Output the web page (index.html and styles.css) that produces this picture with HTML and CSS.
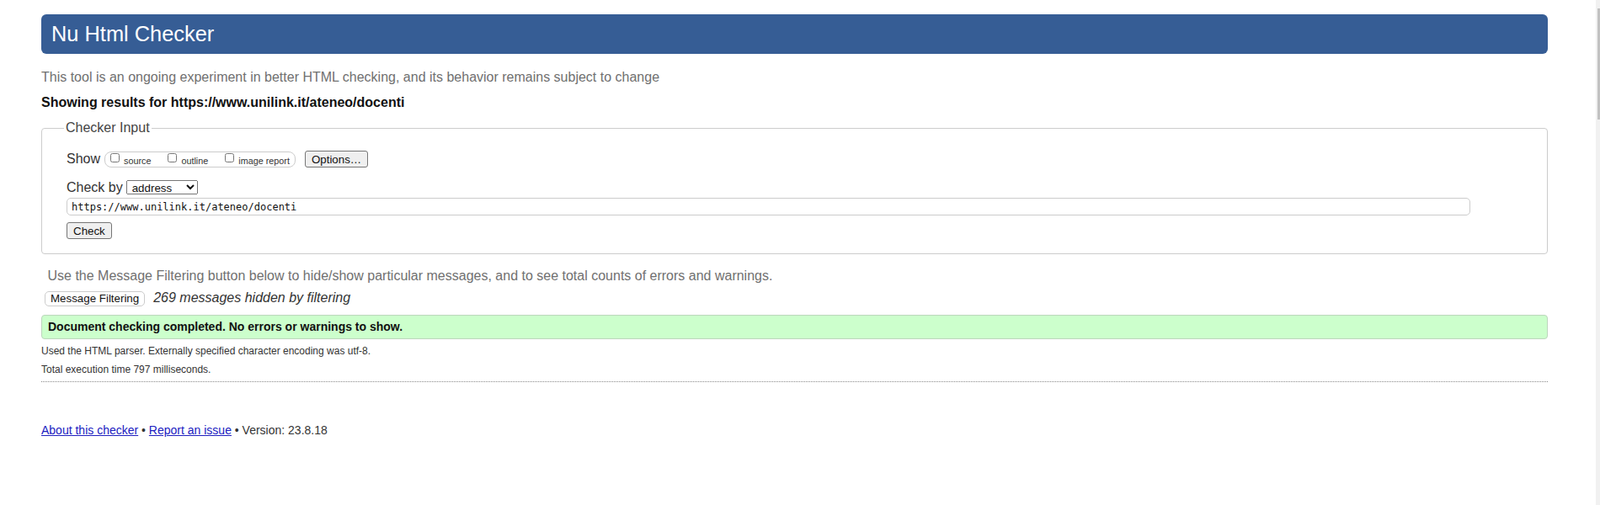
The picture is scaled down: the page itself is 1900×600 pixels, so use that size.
FILE: index.html
```html
<!DOCTYPE html>
<html lang="en">
<head>
    <meta charset="UTF-8">
    <meta name="viewport" content="width=device-width, initial-scale=1.0">
    <title>Showing results for https://www.unilink.it/ateneo/docenti - Nu Html Checker</title>
    <link rel="stylesheet" href="styles.css">
</head>
<body>
    <div class="page">
        <h1 class="masthead">Nu Html Checker</h1>
        <p class="intro">This tool is an ongoing experiment in better HTML checking, and its behavior remains subject to change</p>
        <p class="results-for">Showing results for https://www.unilink.it/ateneo/docenti</p>

        <form class="checker">
            <fieldset>
                <legend>Checker Input</legend>
                <div class="row show-row">
                    <span class="row-label">Show</span>
                    <span class="show-group">
                        <label><input type="checkbox" name="showsource">source</label>
                        <label><input type="checkbox" name="showoutline">outline</label>
                        <label><input type="checkbox" name="showimagereport">image report</label>
                    </span>
                    <button type="button" class="btn options-btn">Options…</button>
                </div>
                <div class="row checkby-row">
                    <span class="row-label">Check by</span>
                    <select class="checkby" name="checkby">
                        <option value="address">address</option>
                        <option value="file">file upload</option>
                        <option value="text">text input</option>
                    </select>
                </div>
                <input class="doc-url" type="url" name="doc" value="https://www.unilink.it/ateneo/docenti">
                <button type="submit" class="btn check-btn">Check</button>
            </fieldset>
        </form>

        <p class="filter-hint">Use the Message Filtering button below to hide/show particular messages, and to see total counts of errors and warnings.</p>
        <div class="filter-row">
            <button type="button" class="filter-btn">Message Filtering</button>
            <span class="hidden-count">269 messages hidden by filtering</span>
        </div>

        <p class="success">Document checking completed. No errors or warnings to show.</p>
        <p class="details">Used the HTML parser. Externally specified character encoding was utf-8.</p>
        <p class="details">Total execution time 797 milliseconds.</p>
        <hr class="divider">

        <p class="footer">
            <a href="#about">About this checker</a> • <a href="#issue">Report an issue</a> • Version: 23.8.18
        </p>
    </div>

    <div class="scrollbar"><div class="scrollbar-thumb"></div></div>
</body>
</html>
```

FILE: styles.css
```css
body {
    margin: 0;
    background: #fff;
    font-family: "Liberation Sans", Arial, sans-serif;
    color: #333;
}
.page {
    width: 1789px;
    margin-left: 49px;
    padding-top: 17px;
}
.masthead {
    margin: 0;
    height: 47px;
    display: flex;
    align-items: center;
    padding-left: 12px;
    background: #365d95;
    color: #fff;
    border-radius: 6px;
    font-size: 25.4px;
    font-weight: normal;
}
.intro {
    margin: 19px 0 0;
    font-size: 16px;
    line-height: 18px;
    color: #707070;
}
.results-for {
    margin: 12px 0 0;
    font-size: 16px;
    line-height: 18px;
    font-weight: bold;
    color: #111;
}

/* checker input box */
.checker fieldset {
    margin: 12px 0 0;
    padding: 18px 20px 17px 29px;
    border: 1px solid #ccc;
    border-radius: 4px;
}
.checker legend {
    margin-left: -3px;
    padding: 0 2px;
    font-size: 16px;
    line-height: 18px;
    color: #444;
}
.row {
    display: flex;
    align-items: center;
}
.row-label {
    font-size: 16px;
    line-height: 20px;
    color: #333;
}
.show-row {
    height: 20px;
}
.show-group {
    display: flex;
    align-items: flex-end;
    height: 17px;
    margin-left: 5px;
    padding: 0 6px;
    border: 1px solid #ccc;
    border-radius: 8px;
}
.show-group label {
    display: flex;
    align-items: flex-end;
    margin-right: 20px;
    font-size: 10.8px;
    line-height: 13px;
    color: #333;
}
.show-group label:last-child {
    margin-right: 0;
}
.show-group input {
    width: 11px;
    height: 11px;
    margin: 0 5px 5px 0;
}
.btn {
    height: 20px;
    padding: 0 6px;
    border: 1px solid #767676;
    border-radius: 3px;
    background: #efefef;
    font-family: "Liberation Sans", Arial, sans-serif;
    font-size: 13.33px;
    color: #111;
}
.options-btn {
    margin-left: 11px;
    padding: 0 7px;
}
.checkby-row {
    height: 19px;
    margin-top: 14px;
}
.checkby {
    width: 85px;
    height: 17px;
    margin-left: 4px;
    padding: 0 2px;
    font-family: "Liberation Sans", Arial, sans-serif;
    font-size: 13.33px;
    color: #111;
}
.doc-url {
    display: block;
    box-sizing: border-box;
    width: 1667px;
    height: 21px;
    margin-top: 3px;
    padding: 0 5px;
    border: 1px solid #ccc;
    border-radius: 5px;
    font-family: "DejaVu Sans Mono", "Liberation Mono", monospace;
    font-size: 12px;
    color: #111;
}
.check-btn {
    display: block;
    margin-top: 8px;
    padding: 0 7px;
}

/* results */
.filter-hint {
    margin: 17px 0 0 7.5px;
    font-size: 16px;
    line-height: 18px;
    color: #707070;
}
.filter-row {
    display: flex;
    align-items: baseline;
    margin-top: 8px;
    padding-left: 4px;
}
.filter-btn {
    height: 18px;
    padding: 0 6px;
    border: 1px solid #ccc;
    border-radius: 5px;
    background: #fff;
    font-family: "Liberation Sans", Arial, sans-serif;
    font-size: 13.33px;
    color: #111;
}
.hidden-count {
    margin-left: 10px;
    font-size: 16px;
    line-height: 18px;
    font-style: italic;
    color: #333;
}
.success {
    margin: 10px 0 0;
    padding: 5px 7px;
    border: 1px solid #bcd6bc;
    border-radius: 4px;
    background: #ccffcc;
    font-size: 14px;
    line-height: 17px;
    font-weight: bold;
    color: #111;
}
.details {
    margin: 0;
    font-size: 12px;
    line-height: 22px;
    color: #333;
}
.success + .details {
    margin-top: 3px;
}
.divider {
    margin: 3px 0 0;
    height: 0;
    border: 0;
    border-top: 1px dotted #888;
}
.footer {
    margin: 49px 0 0;
    font-size: 14px;
    line-height: 16px;
    color: #333;
}
.footer a {
    color: #2020bf;
}

/* the edge of the window scrollbar */
.scrollbar {
    position: fixed;
    top: 0;
    right: 0;
    width: 5px;
    height: 100%;
    background: #f1f1f1;
}
.scrollbar-thumb {
    margin: 10px 0 0 2px;
    height: 132px;
    background: #c1c1c1;
}
```
